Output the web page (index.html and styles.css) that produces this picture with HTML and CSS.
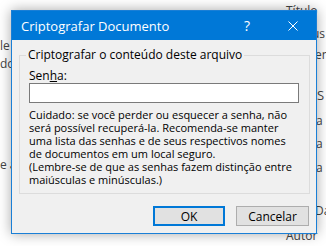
FILE: index.html
```html
<!DOCTYPE html>
<html lang="pt-BR">
<head>
    <meta charset="UTF-8">
    <meta name="viewport" content="width=device-width, initial-scale=1.0">
    <title>Criptografar Documento</title>
    <link rel="stylesheet" href="styles.css">
</head>
<body>
    <!-- document behind the dialog -->
    <div class="doc">
        <span class="frag frag-titulo">Título</span>
        <span class="frag frag-us">us</span>
        <span class="frag frag-le">le</span>
        <span class="frag frag-ent">ent</span>
        <span class="frag frag-do">do</span>
        <span class="frag frag-s">S</span>
        <span class="frag frag-al1">a l</span>
        <span class="frag frag-ae">a e</span>
        <span class="frag frag-ea">e a</span>
        <span class="frag frag-al2">a l</span>
        <span class="frag frag-da">Da</span>
        <span class="frag frag-autor">Autor</span>
    </div>

    <div class="dialog">
        <div class="titlebar">
            <span class="title">Criptografar Documento</span>
            <span class="caption-btn caption-help">?</span>
            <span class="caption-btn">
                <svg width="10" height="10" viewBox="0 0 10 10"><path d="M0.5 0.5L9.5 9.5M9.5 0.5L0.5 9.5" stroke="#fff" stroke-width="1" fill="none"/></svg>
            </span>
        </div>
        <div class="dialog-body">
            <fieldset class="group">
                <legend>Criptografar o conteúdo deste arquivo</legend>
                <label class="field-label" for="senha">Sen<u>h</u>a:</label>
                <input class="field" id="senha" type="password">
                <p class="note">Cuidado: se você perder ou esquecer a senha, não<br>será possível recuperá-la. Recomenda-se manter<br>uma lista das senhas e de seus respectivos nomes<br>de documentos em um local seguro.<br>(Lembre-se de que as senhas fazem distinção entre<br>maiúsculas e minúsculas.)</p>
            </fieldset>
            <div class="actions">
                <button class="btn btn-default">OK</button>
                <button class="btn btn-cancel">Cancelar</button>
            </div>
        </div>
    </div>
</body>
</html>
```

FILE: styles.css
```css
body {
    margin: 0;
    width: 326px;
    height: 246px;
    overflow: hidden;
    position: relative;
    background: #ffffff;
    font-family: "Open Sans", "Noto Sans", sans-serif;
}
.frag {
    position: absolute;
    font-size: 12px;
    line-height: 14px;
    color: #444444;
    white-space: nowrap;
}
.frag-titulo { left: 286px; top: 4px; }
.frag-us { left: 312px; top: 27px; }
.frag-le { left: 0px; top: 39px; }
.frag-ent { left: 315px; top: 48px; }
.frag-do { left: 0px; top: 57px; }
.frag-s { left: 317px; top: 88px; font-size: 13px; }
.frag-al1 { left: 316px; top: 114px; }
.frag-ae { left: 316px; top: 137px; }
.frag-ea { left: 0px; top: 158px; }
.frag-al2 { left: 316px; top: 161px; }
.frag-da { left: 315px; top: 204px; }
.frag-autor { left: 286px; top: 229px; }

.dialog {
    position: absolute;
    left: 11px;
    top: 10px;
    width: 304px;
    height: 222px;
    border: 1px solid #1a7fd6;
    background: #f0f0f0;
    box-shadow: 0 0 12px rgba(0, 0, 0, 0.35);
    display: flex;
    flex-direction: column;
}
.titlebar {
    height: 29px;
    background: #0078d7;
    color: #ffffff;
    display: flex;
    align-items: center;
    padding-left: 9px;
}
.title {
    flex: 1;
    font-size: 13px;
}
.caption-btn {
    width: 46px;
    height: 29px;
    display: flex;
    align-items: center;
    justify-content: center;
    font-size: 14px;
}
.caption-help {
    padding-left: 2px;
}
.dialog-body {
    flex: 1;
    display: flex;
    flex-direction: column;
    padding: 0 6px 7px 7px;
}
.group {
    margin: 7px 0 0 0;
    padding: 0 10px 7px 9px;
    border: 1px solid #dcdcdc;
    min-width: 0;
}
.group legend {
    margin-left: -3px;
    padding: 0 2px;
    font-size: 12px;
    line-height: 16px;
    color: #000000;
}
.field-label {
    display: block;
    margin-top: 5px;
    font-size: 12px;
    line-height: 15px;
    color: #000000;
}
.field {
    display: block;
    box-sizing: border-box;
    width: 100%;
    height: 20px;
    margin: 0;
    border: 1px solid #7a7a7a;
    background: #ffffff;
}
.note {
    margin: 5px 0 0 0;
    font-size: 11px;
    line-height: 13px;
    color: #000000;
    white-space: nowrap;
}
.actions {
    margin-top: auto;
    display: flex;
    justify-content: flex-end;
    gap: 11px;
    padding-right: 1px;
}
.btn {
    box-sizing: border-box;
    height: 20px;
    margin: 0;
    padding: 0;
    background: #e1e1e1;
    border: 1px solid #adadad;
    font-family: inherit;
    font-size: 12px;
    color: #000000;
}
.btn-default {
    width: 72px;
    border: 2px solid #0078d7;
}
.btn-cancel {
    width: 73px;
}
```
